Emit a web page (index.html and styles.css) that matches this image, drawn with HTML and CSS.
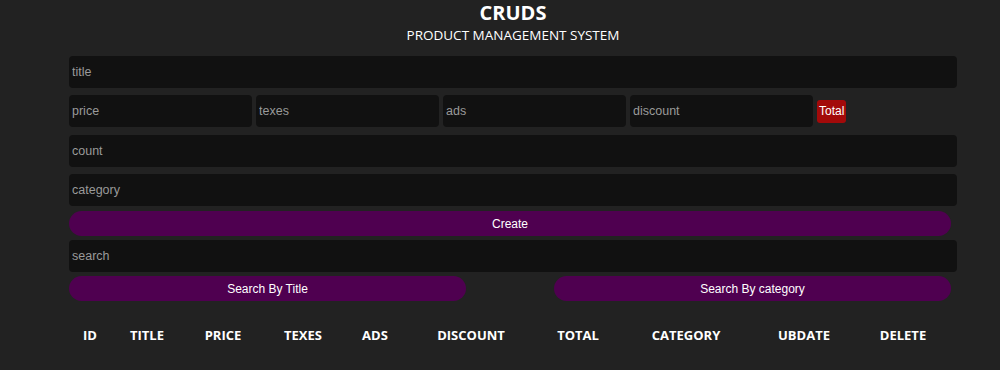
FILE: index.html
```html
<!DOCTYPE html>
<html lang="en">
<head>
  <meta charset="UTF-8" />
  <meta name="viewport" content="width=device-width, initial-scale=1.0"/>
  <title>CRUDS</title>
  <link rel="stylesheet" href="styles.css">
</head>
<body>

<div class="crud">
  <div class="head">
    <h2>CRUDS</h2>
    <p>PRODUCT MANAGEMENT SYSTEM</p>
  </div>

  <div class="inputs">
    <input type="text" id="title" placeholder="title">
    <div class="price">
      <input type="number" id="price" placeholder="price">
      <input type="number" id="taxes" placeholder="texes">
      <input type="number" id="ads" placeholder="ads">
      <input type="number" id="discount" placeholder="discount">
      <small id="total">Total</small>
    </div>
    <input type="number" id="count" placeholder="count">
    <input type="text" id="category" placeholder="category">
    <button id="submit">Create</button>
  </div>

  <div class="outputs">
    <div class="searchBlock">
      <input type="text" id="search" placeholder="search">
      <div class="btnSearch">
        <button id="searchTitle">Search By Title</button>
        <button id="searchCategory">Search By category</button>
      </div>
    </div>

    <table>
      <colgroup>
        <col style="width:42px"><col style="width:72px"><col style="width:80px"><col style="width:80px"><col style="width:64px">
        <col style="width:128px"><col style="width:86px"><col style="width:130px"><col style="width:106px"><col style="width:92px">
      </colgroup>
      <tr>
        <th>ID</th>
        <th>TITLE</th>
        <th>PRICE</th>
        <th>TEXES</th>
        <th>ADS</th>
        <th>DISCOUNT</th>
        <th>TOTAL</th>
        <th>CATEGORY</th>
        <th>UBDATE</th>
        <th>DELETE</th>
      </tr>
      <tbody id="tbody"></tbody>
    </table>
  </div>
</div>

</body>
</html>
```

FILE: styles.css
```css
* {
  box-sizing: border-box;
  margin: 0;
  padding: 0;
}

body {
  background: #222;
  color: #fff;
  font-family: 'Open Sans', 'Segoe UI', sans-serif;
}

.crud {
  width: 888px;
  margin-left: 69px;
}

.head {
  text-align: center;
  padding-top: 1px;
}

.head h2 {
  font-size: 20px;
  font-weight: 700;
  line-height: 24px;
}

.head p {
  font-size: 13.5px;
  line-height: 20px;
}

input {
  display: block;
  width: 100%;
  height: 32px;
  background: #111;
  border: none;
  outline: none;
  border-radius: 4px;
  padding: 4px 3px;
  color: #fff;
  font-family: 'Liberation Sans', Arial, sans-serif;
  font-size: 12.5px;
}

input::placeholder {
  color: #9a9a9a;
}

#title {
  margin-top: 11px;
}

.price {
  display: flex;
  align-items: center;
  gap: 4px;
  margin: 7px 0 8px;
}

.price input {
  width: 183px;
  flex: none;
}

#total {
  background: #a30a0a;
  color: #fff;
  font-family: 'Liberation Sans', Arial, sans-serif;
  font-size: 12px;
  padding: 4px 2px;
  border-radius: 3px;
  line-height: 15px;
}

#category {
  margin-top: 7px;
}

button {
  display: block;
  width: 882px;
  height: 25px;
  border: none;
  border-radius: 20px;
  background: #4f0050;
  color: #fff;
  font-family: 'Liberation Sans', Arial, sans-serif;
  font-size: 12px;
  cursor: pointer;
}

#submit {
  margin-top: 5px;
}

#search {
  margin-top: 4px;
}

.btnSearch {
  display: flex;
  justify-content: space-between;
  width: 882px;
  margin-top: 4px;
}

.btnSearch button {
  width: 397px;
}

table {
  table-layout: fixed;
  width: 880px;
  border-collapse: collapse;
  margin-top: 20px;
}

th {
  font-size: 13px;
  font-weight: 700;
  text-align: center;
  padding: 5px 0;
}
```
